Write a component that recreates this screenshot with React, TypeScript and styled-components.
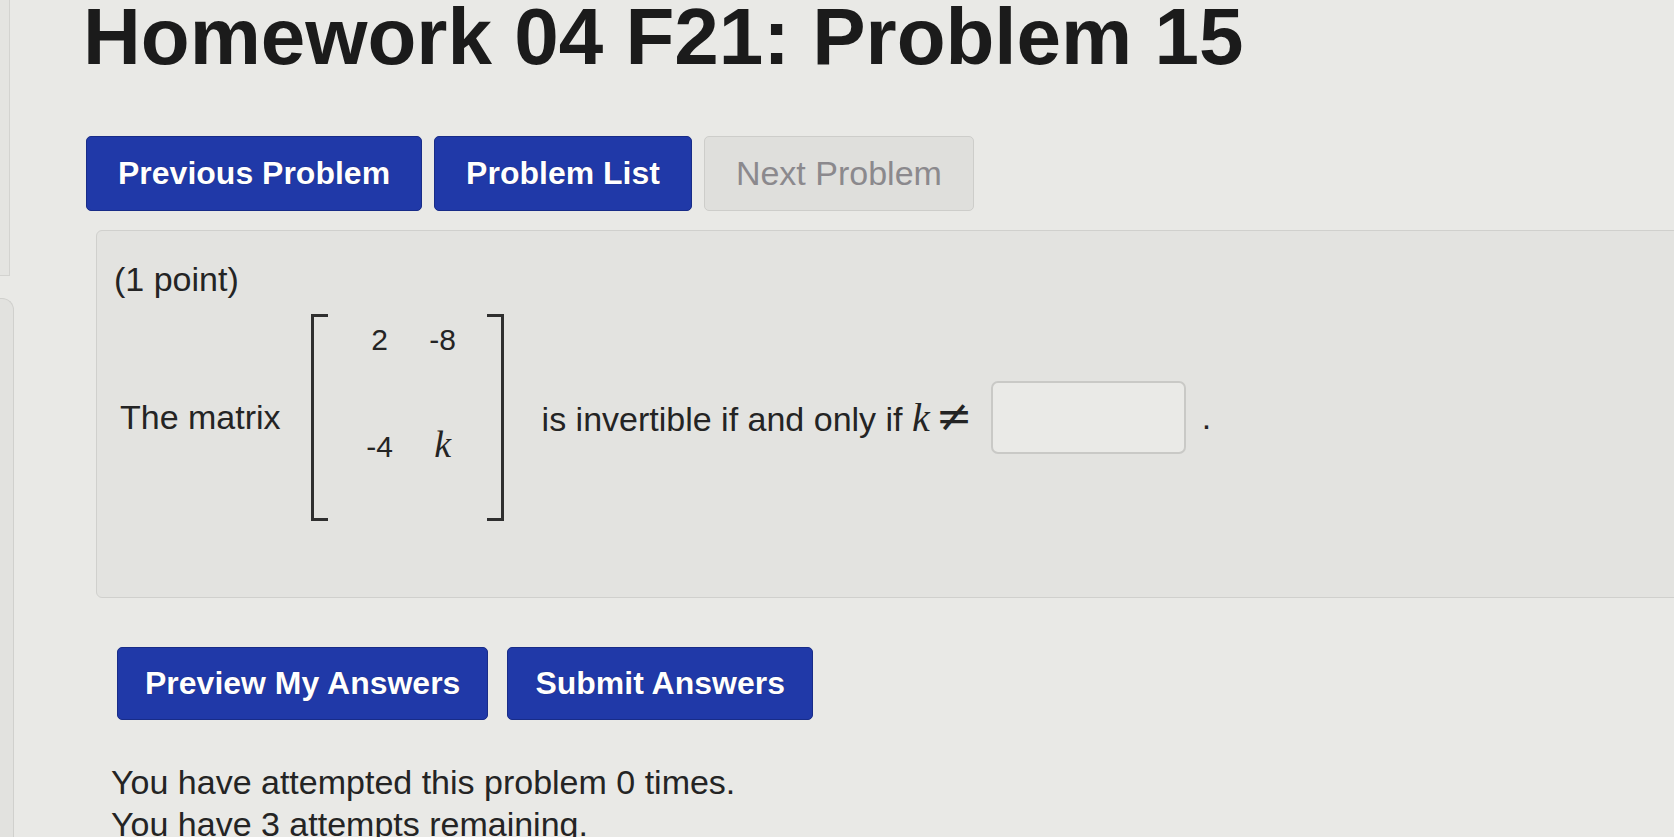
import styled, { createGlobalStyle } from "styled-components";

const GlobalStyle = createGlobalStyle`
  html, body {
    margin: 0;
    padding: 0;
    background: #e9e9e6;
    overflow: hidden;
  }
  body {
    font-family: "Liberation Sans", Arial, sans-serif;
    color: #242424;
  }
`;

const Shell = styled.div`
  display: flex;
  width: 1674px;
  height: 837px;
  overflow: hidden;
`;

const Edge = styled.div`
  width: 14px;
  flex-shrink: 0;
  display: flex;
  flex-direction: column;
  gap: 22px;
`;

const EdgeTop = styled.div`
  width: 9px;
  height: 275px;
  background: #e4e4e1;
  border-right: 1px solid #d3d3d0;
  border-bottom: 1px solid #d3d3d0;
`;

const EdgeBottom = styled.div`
  flex: 1;
  background: #e2e2df;
  border-right: 1px solid #d0d0cd;
  border-top: 1px solid #d0d0cd;
  border-top-right-radius: 12px;
`;

const Page = styled.main`
  flex: 1;
  min-width: 0;
  padding-left: 69px;
`;

const Title = styled.h1`
  margin: -9px 0 0;
  font-size: 80px;
  line-height: 92px;
  font-weight: 700;
  color: #1b1b1b;
  white-space: nowrap;
`;

const NavRow = styled.div`
  display: flex;
  gap: 12px;
  margin: 53px 0 0 3px;
`;

const ActionRow = styled.div`
  display: flex;
  gap: 19px;
  margin: 49px 0 0 34px;
`;

const Button = styled.button<{ $muted?: boolean; $h?: number; $px?: number }>`
  height: ${(p) => p.$h ?? 75}px;
  padding: 0 ${(p) => p.$px ?? 31}px;
  border-radius: 5px;
  font-family: "Liberation Sans", Arial, sans-serif;
  font-size: ${(p) => (p.$muted ? 34 : 32)}px;
  font-weight: ${(p) => (p.$muted ? 400 : 700)};
  white-space: nowrap;
  cursor: ${(p) => (p.$muted ? "default" : "pointer")};
  background: ${(p) => (p.$muted ? "#dfdfdc" : "#2039a8")};
  color: ${(p) => (p.$muted ? "#8b898d" : "#ffffff")};
  border: 1px solid ${(p) => (p.$muted ? "#cdcdca" : "#182c88")};
  text-shadow: ${(p) => (p.$muted ? "none" : "0 0 1px rgba(0, 0, 0, 0.45)")};
`;

const Panel = styled.section`
  margin: 19px -60px 0 13px;
  padding: 28px 17px 76px;
  background: #e3e3e0;
  border: 1px solid #d0d0cd;
  border-radius: 6px 0 0 6px;
`;

const Text = styled.div`
  font-size: 34px;
  line-height: 41px;
  color: #242424;
  white-space: nowrap;
`;

const Statement = styled.div`
  display: flex;
  align-items: center;
  margin: 14px 0 0 6px;
`;

const Matrix = styled.div`
  display: flex;
  height: 207px;
  margin: 0 38px 0 30px;
`;

const Bracket = styled.div<{ $side: "left" | "right" }>`
  width: 14px;
  border: 3px solid #2f2f2f;
  ${(p) => (p.$side === "left" ? "border-right: none;" : "border-left: none;")}
`;

const MatrixBody = styled.div`
  display: flex;
  flex-direction: column;
  gap: 68px;
  padding: 8px 17px 0 25px;
`;

const MatrixRow = styled.div`
  display: grid;
  grid-template-columns: 54px 54px;
  column-gap: 9px;
  align-items: baseline;
`;

const Cell = styled.span`
  text-align: center;
  font-size: 30px;
  line-height: 36px;
  color: #242424;
`;

const Var = styled.i<{ $size?: number }>`
  font-family: "Liberation Serif", "Times New Roman", serif;
  font-size: ${(p) => p.$size ?? 40}px;
  color: #242424;
`;

const Rel = styled.span`
  font-family: "DejaVu Serif", serif;
  font-size: 44px;
  margin-left: 6px;
`;

const AnswerBox = styled.input`
  width: 195px;
  height: 73px;
  box-sizing: border-box;
  margin-left: 18px;
  border: 2px solid #c9c9c6;
  border-radius: 7px;
  background: #eaeae7;
  outline: none;
`;

const Period = styled.span`
  margin-left: 16px;
  font-size: 34px;
`;

const Status = styled(Text)`
  margin-left: 28px;
  line-height: 42px;
`;

const StatusBlock = styled.div`
  margin-top: 41px;
`;

export default function App() {
  return (
    <>
      <GlobalStyle />
      <Shell>
        <Edge>
          <EdgeTop />
          <EdgeBottom />
        </Edge>
        <Page>
          <Title>Homework 04 F21: Problem 15</Title>
          <NavRow>
            <Button>Previous Problem</Button>
            <Button>Problem List</Button>
            <Button $muted disabled>
              Next Problem
            </Button>
          </NavRow>
          <Panel>
            <Text>(1 point)</Text>
            <Statement>
              <Text>The matrix</Text>
              <Matrix>
                <Bracket $side="left" />
                <MatrixBody>
                  <MatrixRow>
                    <Cell>2</Cell>
                    <Cell>-8</Cell>
                  </MatrixRow>
                  <MatrixRow>
                    <Cell>-4</Cell>
                    <Cell>
                      <Var $size={38}>k</Var>
                    </Cell>
                  </MatrixRow>
                </MatrixBody>
                <Bracket $side="right" />
              </Matrix>
              <Text>
                is invertible if and only if <Var>k</Var>
                <Rel>≠</Rel>
              </Text>
              <AnswerBox type="text" aria-label="answer" />
              <Period>.</Period>
            </Statement>
          </Panel>
          <ActionRow>
            <Button $h={73} $px={27}>
              Preview My Answers
            </Button>
            <Button $h={73} $px={27}>
              Submit Answers
            </Button>
          </ActionRow>
          <StatusBlock>
            <Status>You have attempted this problem 0 times.</Status>
            <Status>You have 3 attempts remaining.</Status>
          </StatusBlock>
        </Page>
      </Shell>
    </>
  );
}
